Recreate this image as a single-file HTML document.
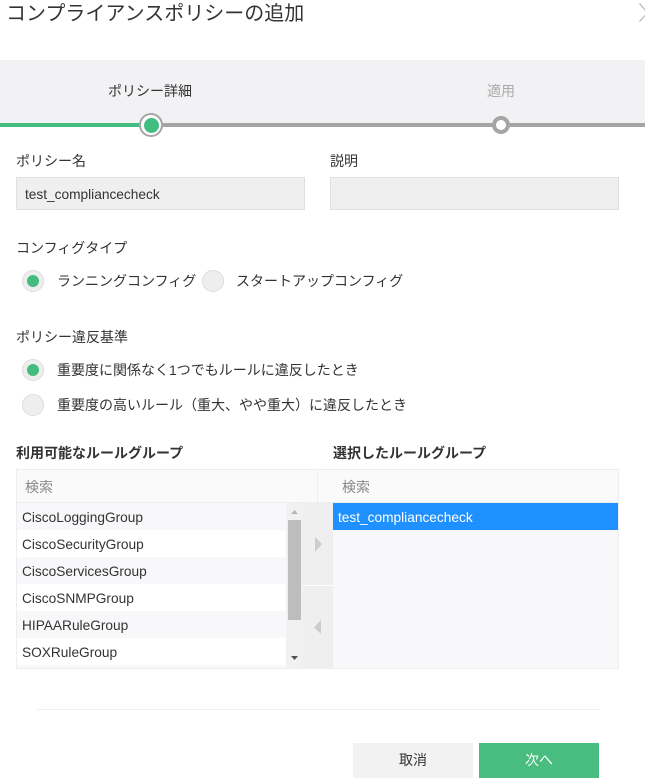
<!DOCTYPE html>
<html lang="ja"><head><meta charset="utf-8"><style>
html,body{margin:0;padding:0;background:#fff}
body{position:relative;width:645px;height:781px;overflow:hidden;font-family:"Liberation Sans","Noto Sans CJK JP",sans-serif;font-size:13px;color:#333}
.b{position:absolute}
.t{position:absolute;white-space:nowrap;line-height:20px;height:20px}
.j{font-size:14px}
.l{font-size:13.7px;color:#333}
</style></head><body>
<div class="t" style="left:6px;top:2px;font-size:20px;line-height:24px;height:24px;color:#333">コンプライアンスポリシーの追加</div>
<svg class="b" style="left:630px;top:0" width="15" height="30"><path d="M9.500 3.500L16 11M16 14.500L9.500 21.500" stroke="#aaa" stroke-width="1" fill="none"/></svg>

<div class="b" style="left:0;top:60px;width:645px;height:63px;background:#f2f2f4"></div>
<div class="b" style="left:0;top:123px;width:140px;height:4px;background:#43bd7f"></div>
<div class="b" style="left:150px;top:123px;width:495px;height:4px;background:#a5a5a5"></div>
<div class="b" style="left:139px;top:113px;width:20px;height:20px;border:2px solid #a5a5a5;border-radius:50%;background:#fff"></div>
<div class="b" style="left:143.500px;top:117.500px;width:15px;height:15px;border-radius:50%;background:#43bd7f"></div>
<div class="b" style="left:492px;top:116px;width:10px;height:10px;border:4px solid #a5a5a5;border-radius:50%;background:#fff"></div>
<div class="t j" style="left:108px;top:81px">ポリシー詳細</div>
<div class="t j" style="left:487px;top:81px;color:#aaa">適用</div>

<div class="t j" style="left:16px;top:151px">ポリシー名</div>
<div class="t j" style="left:330px;top:151px">説明</div>
<div class="b" style="left:16px;top:177px;width:287px;height:31px;background:#efefef;border:1px solid #e0e0e0"></div>
<div class="b" style="left:330px;top:177px;width:287px;height:31px;background:#efefef;border:1px solid #e0e0e0"></div>
<div class="t l" style="left:25px;top:185px">test_compliancecheck</div>

<div class="t j" style="left:16px;top:238px">コンフィグタイプ</div>
<div class="b" style="left:22px;top:270px;width:20px;height:20px;border-radius:50%;background:#eee;border:1px solid #ddd"></div>
<div class="b" style="left:27px;top:275px;width:12px;height:12px;border-radius:50%;background:#43bd7f"></div>
<div class="t j" style="left:57px;top:271px">ランニングコンフィグ</div>
<div class="b" style="left:202px;top:270px;width:20px;height:20px;border-radius:50%;background:#eee;border:1px solid #ddd"></div>
<div class="t j" style="left:236px;top:271px">スタートアップコンフィグ</div>

<div class="t j" style="left:16px;top:327px">ポリシー違反基準</div>
<div class="b" style="left:22px;top:359px;width:20px;height:20px;border-radius:50%;background:#eee;border:1px solid #ddd"></div>
<div class="b" style="left:27px;top:364px;width:12px;height:12px;border-radius:50%;background:#43bd7f"></div>
<div class="t j" style="left:57px;top:360px">重要度に関係なく1つでもルールに違反したとき</div>
<div class="b" style="left:22px;top:394px;width:20px;height:20px;border-radius:50%;background:#eee;border:1px solid #ddd"></div>
<div class="t j" style="left:57px;top:395px">重要度の高いルール（重大、やや重大）に違反したとき</div>

<div class="t j" style="left:16px;top:443px;font-weight:700">利用可能なルールグループ</div>
<div class="t j" style="left:333px;top:443px;font-weight:700">選択したルールグループ</div>

<div class="b" style="left:16px;top:469px;width:601px;height:198px;border:1px solid #eee;background:#fff"></div>
<div class="b" style="left:17px;top:470px;width:300px;height:32px;background:#fafafa"></div>
<div class="b" style="left:318px;top:470px;width:300px;height:32px;background:#fafafa"></div>
<div class="b" style="left:317px;top:470px;width:1px;height:32px;background:#eee"></div>
<div class="b" style="left:17px;top:502px;width:601px;height:1px;background:#eee"></div>
<div class="t j" style="left:25px;top:477px;color:#888">検索</div>
<div class="t j" style="left:342px;top:477px;color:#888">検索</div>

<div class="b" style="left:17px;top:503px;width:269px;height:27px;background:#f8f8fa"></div>
<div class="b" style="left:17px;top:557px;width:269px;height:27px;background:#f8f8fa"></div>
<div class="b" style="left:17px;top:611px;width:269px;height:27px;background:#f8f8fa"></div>
<div class="b" style="left:17px;top:665px;width:269px;height:3px;background:#f8f8fa"></div>
<div class="t l" style="left:22px;top:508px">CiscoLoggingGroup</div>
<div class="t l" style="left:22px;top:535px">CiscoSecurityGroup</div>
<div class="t l" style="left:22px;top:562px">CiscoServicesGroup</div>
<div class="t l" style="left:22px;top:589px">CiscoSNMPGroup</div>
<div class="t l" style="left:22px;top:616px">HIPAARuleGroup</div>
<div class="t l" style="left:22px;top:643px">SOXRuleGroup</div>

<div class="b" style="left:286px;top:503px;width:17px;height:165px;background:#f1f1f1"></div>
<div class="b" style="left:288px;top:520px;width:13px;height:100px;background:#bdbdbd"></div>
<svg class="b" style="left:286px;top:503px" width="17" height="165"><path d="M5 11L8.500 7L12 11Z" fill="#b5b5b5"/><path d="M5 153L12 153L8.500 157Z" fill="#505050"/></svg>

<div class="b" style="left:303px;top:503px;width:30px;height:165px;background:#efefef"></div>
<div class="b" style="left:303px;top:585px;width:30px;height:1px;background:#fff"></div>
<svg class="b" style="left:303px;top:503px" width="30" height="165"><path d="M12 34L19 41L12 49Z" fill="#ccc"/><path d="M18 117L11 124.500L18 131Z" fill="#ccc"/></svg>

<div class="b" style="left:333px;top:503px;width:285px;height:165px;background:#f8f8fa"></div>
<div class="b" style="left:333px;top:503px;width:285px;height:27px;background:#1e90ff"></div>
<div class="t l" style="left:338px;top:508px;color:#fff">test_compliancecheck</div>

<div class="b" style="left:37px;top:709px;width:562px;height:1px;background:#eee"></div>
<div class="b" style="left:353px;top:743px;width:120px;height:35px;background:#f2f2f2"></div>
<div class="b" style="left:479px;top:743px;width:120px;height:35px;background:#48bd7f"></div>
<div class="t j" style="left:399px;top:750px;color:#333">取消</div>
<div class="t j" style="left:525px;top:750px;color:#fff">次へ</div>
</body></html>
